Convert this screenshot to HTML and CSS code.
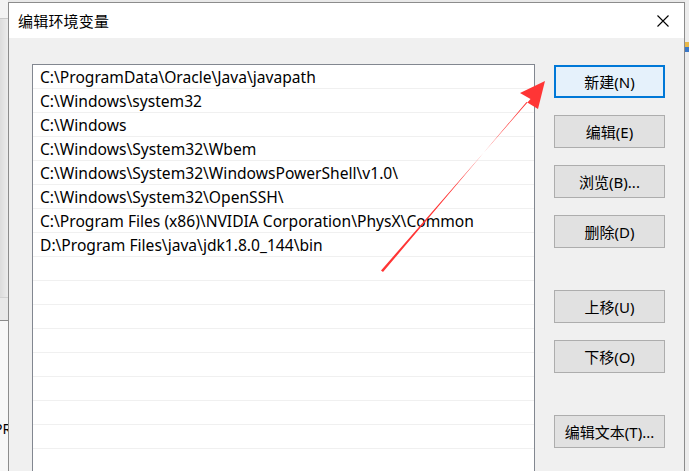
FILE: index.html
```html
<!DOCTYPE html>
<html lang="zh-CN">
<head>
  <meta charset="utf-8" />
  <title>编辑环境变量</title>
  <link rel="stylesheet" href="styles.css">
</head>
<body>
<div class="desk">
  <div class="bg-left">
    <div class="bg-left--top"></div>
    <div class="bg-left--rows"></div>
    <div class="bg-left--bottom"><span class="bg-left--pr">PR</span></div>
  </div>

  <div class="dlg">
    <div class="dlg-title">
      <span class="dlg-title--text">编辑环境变量</span>
      <svg class="dlg-close" width="12" height="12" viewBox="0 0 12 12">
        <path d="M0.5 0.5 L11.5 11.5 M11.5 0.5 L0.5 11.5" stroke="#000" stroke-width="1.1" fill="none" />
      </svg>
    </div>
    <div class="dlg-body">
      <div class="env-list">
        <div class="env-row">C:\ProgramData\Oracle\Java\javapath</div>
        <div class="env-row">C:\Windows\system32</div>
        <div class="env-row">C:\Windows</div>
        <div class="env-row">C:\Windows\System32\Wbem</div>
        <div class="env-row">C:\Windows\System32\WindowsPowerShell\v1.0\</div>
        <div class="env-row">C:\Windows\System32\OpenSSH\</div>
        <div class="env-row">C:\Program Files (x86)\NVIDIA Corporation\PhysX\Common</div>
        <div class="env-row">D:\Program Files\java\jdk1.8.0_144\bin</div>
        <div class="env-row"></div>
        <div class="env-row"></div>
        <div class="env-row"></div>
        <div class="env-row"></div>
        <div class="env-row"></div>
        <div class="env-row"></div>
        <div class="env-row"></div>
        <div class="env-row"></div>
        <div class="env-row"></div>
      </div>
      <div class="btn-col">
        <button class="btn btn--default">新建(N)</button>
        <button class="btn">编辑(E)</button>
        <button class="btn">浏览(B)...</button>
        <button class="btn">删除(D)</button>
        <button class="btn btn--sep">上移(U)</button>
        <button class="btn">下移(O)</button>
        <button class="btn btn--sep">编辑文本(T)...</button>
      </div>
    </div>
  </div>

  <div class="bg-right">
    <div class="bg-right--icon"></div>
  </div>
</div>

<svg class="arrow" width="689" height="471" viewBox="0 0 689 471">
  <polygon fill="#ff3535" points="383,272 526.5,102 538,109 545,81 520,93 530.5,99 381,270.5" />
</svg>
</body>
</html>
```

FILE: styles.css
```css
:root {
  --face: #f0f0f0;
  --white: #fff;
  --line: #f0f0f0;
  --frame: #828790;
  --btn: #e1e1e1;
  --btn-edge: #adadad;
  --accent: #0078d7;
  --accent-bg: #e5f1fb;
  --ink: #000;
}
html, body {
  margin: 0;
  padding: 0;
  height: 100%;
  overflow: hidden;
}
body {
  position: relative;
  background: #e9e9e9;
  font-family: "Noto Sans", "Noto Sans CJK SC", sans-serif;
  color: var(--ink);
}
.desk {
  display: flex;
  height: 471px;
}

/* window behind, left side */
.bg-left {
  width: 8px;
  display: flex;
  flex-direction: column;
  flex-shrink: 0;
}
.bg-left--top {
  height: 18px;
  background: #f3f3f3;
  border-bottom: 1px solid #c8c8c8;
}
.bg-left--rows {
  height: 278px;
  background: linear-gradient(90deg, #dcdcdc, #ececec);
  border-bottom: 1px solid #d2d2d2;
  box-shadow: 0 21px 0 -20px #d2d2d2;
}
.bg-left--bottom {
  flex: 1;
  margin-top: 22px;
  border-top: 1px solid #8a8a8a;
  background: #f7f7f7;
  overflow: hidden;
}
.bg-left--pr {
  display: block;
  margin: 98px 0 0 -6px;
  font-size: 14px;
  white-space: nowrap;
}

/* dialog */
.dlg {
  width: 675px;
  margin-top: 2px;
  border: 1px solid #8c8c8c;
  border-bottom: none;
  background: var(--face);
  display: flex;
  flex-direction: column;
  flex-shrink: 0;
  overflow: hidden;
}
.dlg-title {
  height: 35px;
  flex-shrink: 0;
  background: var(--white);
  display: flex;
  align-items: center;
  justify-content: space-between;
  padding: 0 15px 0 9px;
}
.dlg-title--text {
  font-size: 15px;
  letter-spacing: 0.2px;
}
.dlg-close {
  margin-top: 1px;
}
.dlg-body {
  display: flex;
  flex-shrink: 0;
  padding: 26px 0 0 23px;
  gap: 19px;
}

.env-list {
  width: 501px;
  height: 430px;
  border: 1px solid var(--frame);
  background: var(--white);
  overflow: hidden;
}
.env-row {
  height: 23px;
  line-height: 25px;
  overflow: hidden;
  border-bottom: 1px solid var(--line);
  padding-left: 7px;
  font-size: 15.6px;
  white-space: nowrap;
}

.btn-col {
  display: flex;
  flex-direction: column;
  gap: 17px;
  padding-top: 1px;
}
.btn {
  width: 111px;
  height: 33px;
  box-sizing: border-box;
  background: var(--btn);
  border: 1px solid var(--btn-edge);
  font-family: "Noto Sans", "Noto Sans CJK SC", sans-serif;
  font-size: 15px;
  color: var(--ink);
  padding: 0;
}
.btn--default {
  background: var(--accent-bg);
  border: 2px solid var(--accent);
}
.btn--sep {
  margin-top: 25px;
}

/* window behind, right side */
.bg-right {
  flex: 1;
  background: #ececec;
}
.bg-right--icon {
  margin-top: 42px;
  width: 4px;
  height: 10px;
  background: linear-gradient(#e8b84a 50%, #3a78c8 50%);
}

.arrow {
  position: absolute;
  left: 0;
  top: 0;
  pointer-events: none;
}
```
